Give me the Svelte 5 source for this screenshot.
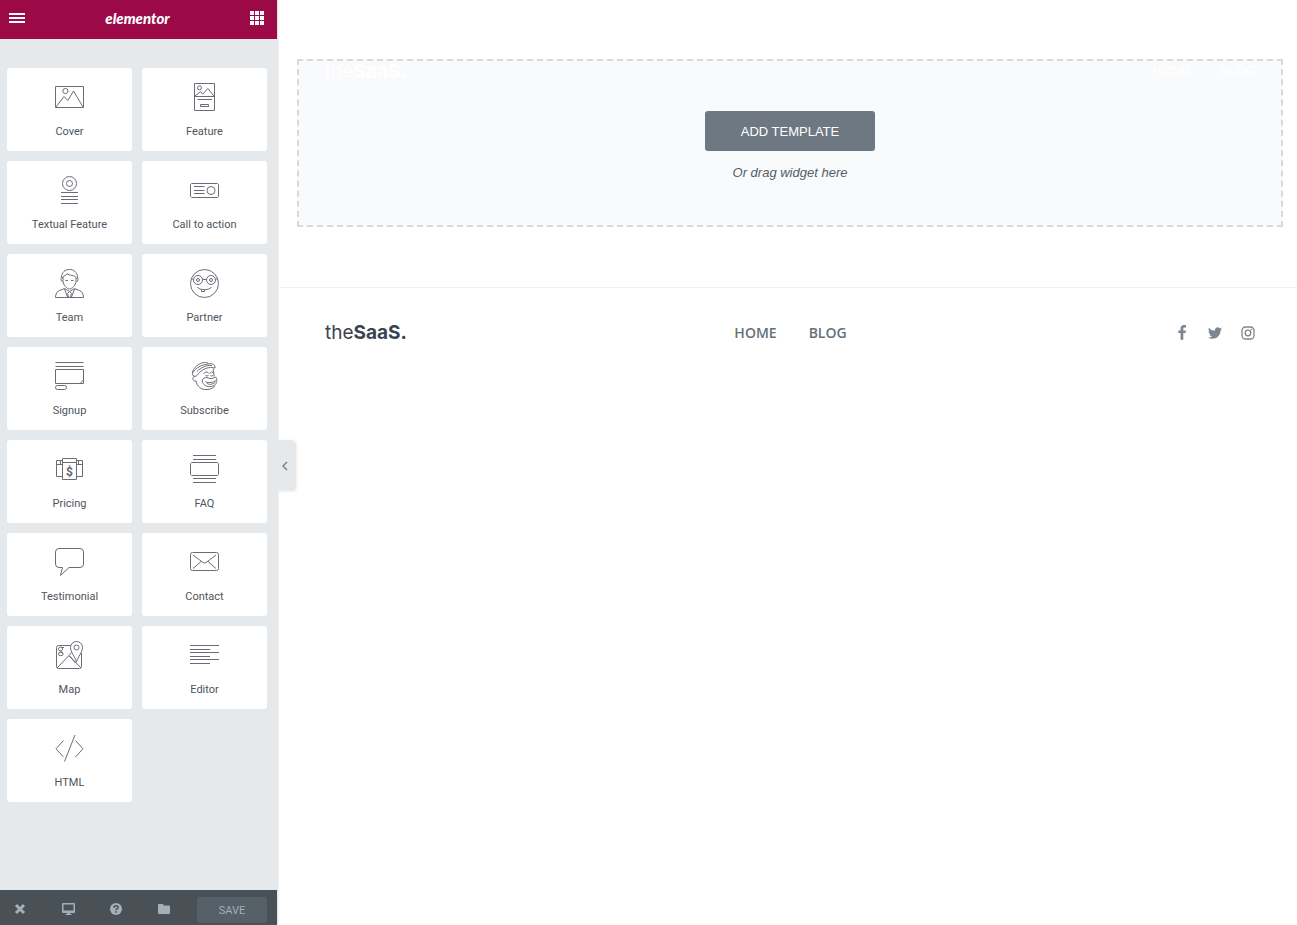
<script lang="ts">
	const widgets = [
		{ id: 'cover', name: 'Cover' },
		{ id: 'feature', name: 'Feature' },
		{ id: 'textual', name: 'Textual Feature' },
		{ id: 'cta', name: 'Call to action' },
		{ id: 'team', name: 'Team' },
		{ id: 'partner', name: 'Partner' },
		{ id: 'signup', name: 'Signup' },
		{ id: 'subscribe', name: 'Subscribe' },
		{ id: 'pricing', name: 'Pricing' },
		{ id: 'faq', name: 'FAQ' },
		{ id: 'testimonial', name: 'Testimonial' },
		{ id: 'contact', name: 'Contact' },
		{ id: 'map', name: 'Map' },
		{ id: 'editor', name: 'Editor' },
		{ id: 'html', name: 'HTML' }
	];

	// stroke icons on a 29x29 grid
	const icons: Record<string, string> = {
		cover:
			'M.5 3.5h28v21H.5zM7.8 8a2.6 2.6 0 1 0 5.2 0a2.6 2.6 0 1 0-5.2 0M1 24L9 13.5l3.8 4L18.5 8L28 24',
		feature:
			'M4.5.5h20v27h-20zM4.5 13.5h20M7.5 4.8a2 2 0 1 0 4 0a2 2 0 1 0-4 0M5 13l5.3-4.2l2.5 2.2l5-5.5L24 13M7.5 16.5H22M10.5 21.5h8v2h-8z',
		textual:
			'M7.5 7.5a7 7 0 1 0 14 0a7 7 0 1 0-14 0M11.5 7.5a3 3 0 1 0 6 0a3 3 0 1 0-6 0M6 16.5h17M6 20.5h17M6 23.5h17M6 27.5h17',
		cta: 'M1.5 7.5h26l1 1v12l-1 1h-26l-1-1v-12zM4 10.5h10.5M4 14.5h10.5M4 17.5h10.5M17 14.5a4 4 0 1 0 8 0a4 4 0 1 0-8 0',
		team: 'M7.5 13C5.5 12 6 9 6.5 8C7 3 10 .5 14.5 .5S22 3 22.5 8C23 9 23.5 12 21.5 13M8 8v4c0 4 4 8 6.5 8s6.5-4 6.5-8V9M7.5 9C8 6.5 12 6.5 12 4.5C14 7 20 5.5 21.5 9.5M10.5 11.5h2.5M16 11.5h2.5M.5 28.5C.5 25 2 22.5 4.5 21.5L9.5 19.5L14.5 22.5L19.5 19.5L24.5 21.5C27 22.5 28.5 25 28.5 28.5zM9.5 20l3 8M19.5 20l-3 8M14.5 22.5l-2 2l1 3.5M14.5 22.5l2 2l-1 3.5',
		partner:
			'M.5 14.5a14 14 0 1 0 28 0a14 14 0 1 0-28 0M3.5 11a4.5 4.5 0 1 0 9 0a4.5 4.5 0 1 0-9 0M16.5 11a4.5 4.5 0 1 0 9 0a4.5 4.5 0 1 0-9 0M6.5 11a1.5 1.5 0 1 0 3 0a1.5 1.5 0 1 0-3 0M19.5 11a1.5 1.5 0 1 0 3 0a1.5 1.5 0 1 0-3 0M12.5 10.5h4M1.5 9.5l2 1M27.5 9.5l-2 1M7.5 18C9 21.5 20 21.5 21.5 18M11.5 20.5v2h3v-2',
		signup:
			'M.5 .5h28M.5 4.5h28M.5 7.5h28v14H.5zM28.5 18l-3.5 3.5M3 23.5h6.5a2 2 0 0 1 0 4H2.5a2 2 0 0 1 0-4z',
		subscribe:
			'M3.5 14C0 10.5 5 4 10.5 1.5C13.5 0 18 0 18.5 2C22 1 25.500 2.500 25 6C19 4.500 13 6.500 8.5 11.5C7.5 13.5 5.5 15 3.5 14M3 10.500C6 6 11 2.500 18.5 2M7 9.500C11 5.500 16 3 22 3.500M5 14.5C1.5 15 2.5 19.5 6 19C7 24.5 11 28 17 27.5C21 27.5 23.5 25.5 25 24M23.5 6.5C22.500 9 24.500 11 24 14.500M14 12C14 9.500 18 9.500 19 11.5M20 11.5C20.500 9.500 23 9.500 23.500 11.5M15.500 13.500q1.500 1 3 0M20.500 13.500q1 1 2.500 0M17 15.500C12 15 11 20 14 22.500C16.500 25.500 23 25 25.500 22.500C27 20 27.500 17 25.500 15C23 17 20 17 17 15.500M15.500 19.500C18 21.500 24 20.500 26.500 18M16.500 20.500C18 23.500 23 22.500 25.500 20',
		pricing:
			'M7.5 3.5h14v21h-14zM7.5 7.5h14M7.5 5.5h-6v16h6M1.5 9.5h6M21.5 5.5h6v16h-6M21.5 9.5h6M5.5 5.5v4M23.5 5.5v4',
		faq: 'M3 .5h23M3 4.5h23M1.5 7.5h26l1 1v11l-1 1h-26l-1-1v-11zM3 23.5h23M3 27.5h23',
		testimonial:
			'M4 .5h21a3.5 3.5 0 0 1 3.5 3.5v12a3.5 3.5 0 0 1-3.5 3.5H14L5.5 27.5L7.5 19.5H4A3.5 3.5 0 0 1 .5 16V4A3.5 3.5 0 0 1 4 .5z',
		contact:
			'M2.5 4.5h24a2 2 0 0 1 2 2v14a2 2 0 0 1-2 2h-24a2 2 0 0 1-2-2v-14a2 2 0 0 1 2-2zM3 7L13 14.5q1.5 1 3 0L26 7M3 20.5L11 13.5M26 20.5L18 13.5',
		map: 'M15.5 4.5h-12a2 2 0 0 0-2 2v19a2 2 0 0 0 2 2h21a2 2 0 0 0 2-2V12M2 27L14 14.5L26 27M14 14.5L16.5 11.5M21.5 20.5C20 16 15.5 11 15.5 6.5a6 6 0 0 1 12 0C27.5 11 23 16 21.5 20.5zM19 6.5a2.5 2.5 0 1 0 5 0a2.5 2.5 0 1 0-5 0M14.5 15l6 7l1-2M3.500 8a2 2 0 1 0 4 0a2 2 0 1 0-4 0M6 6.500h3M5.500 10l2.500 2M3.500 13a2.300 1.700 0 1 0 4.600 0a2.300 1.700 0 1 0-4.600 0',
		editor: 'M0 4.5h29M0 8.5h20M0 11.5h29M0 15.5h20M0 18.5h29M0 22.5h20',
		html: 'M8.5 6.5L1 14.8L8.5 23M20.5 6.5L28 14.8L20.5 23M20 1L9.5 27.5'
	};
</script>

<div class="editor">
	<aside class="panel">
		<header class="panel-header">
			<button class="icon-btn" aria-label="Menu">
				<svg width="16" height="14" viewBox="0 0 16 14" fill="currentColor">
					<path d="M0 2h16v2H0zM0 6h16v2H0zM0 10h16v2H0z" />
				</svg>
			</button>
			<span class="brand">elementor</span>
			<button class="icon-btn" aria-label="Widgets">
				<svg width="14" height="14" viewBox="0 0 14 14" fill="currentColor">
					<path
						d="M0 0h4v4H0zM5 0h4v4H5zM10 0h4v4h-4zM0 5h4v4H0zM5 5h4v4H5zM10 5h4v4h-4zM0 10h4v4H0zM5 10h4v4H5zM10 10h4v4h-4z"
					/>
				</svg>
			</button>
		</header>

		<div class="panel-body">
			<div class="widgets">
				{#each widgets as widget}
					<button class="widget">
						<svg class="widget-icon" viewBox="0 0 29 29" aria-hidden="true">
							<path d={icons[widget.id]} />
							{#if widget.id === 'pricing'}
								<text x="14.5" y="20.5">$</text>
							{/if}
						</svg>
						<span>{widget.name}</span>
					</button>
				{/each}
			</div>
			<button class="collapse" aria-label="Hide panel">
				<svg width="6" height="10" viewBox="0 0 6 10"><path d="M5 1L1 5l4 4" /></svg>
			</button>
		</div>

		<footer class="panel-footer">
			<div class="tools">
				<button class="icon-btn" aria-label="Close">
					<svg width="16" height="16" viewBox="0 0 16 16">
						<path d="M4 4l8 8M12 4l-8 8" fill="none" stroke="currentColor" stroke-width="3" />
					</svg>
				</button>
				<button class="icon-btn" aria-label="Responsive mode">
					<svg width="16" height="16" viewBox="0 0 16 16" fill="currentColor">
						<path
							fill-rule="evenodd"
							d="M3 2h11q1 0 1 1v8q0 1-1 1h-4v1h1.5v1h-6v-1H7v-1H3q-1 0-1-1V3q0-1 1-1zM3.5 3.500v6h10v-6z"
						/>
					</svg>
				</button>
				<button class="icon-btn" aria-label="Help">
					<svg width="16" height="16" viewBox="0 0 16 16">
						<circle cx="8" cy="8" r="6" fill="currentColor" />
						<path
							d="M6 6.7C6 4.2 10 4.2 10 6.5C10 7.8 8 7.8 8 9.3M8 10.2v1.6"
							fill="none"
							stroke="#495157"
							stroke-width="1.6"
						/>
					</svg>
				</button>
				<button class="icon-btn" aria-label="Templates">
					<svg width="16" height="16" viewBox="0 0 16 16" fill="currentColor">
						<path d="M3 3h3.5q1 0 1 1v.5H13q1 0 1 1V12q0 1-1 1H3q-1 0-1-1V4q0-1 1-1z" />
					</svg>
				</button>
			</div>
			<button class="save">SAVE</button>
		</footer>
	</aside>

	<main class="preview">
		<section class="drop-area">
			<div class="site-header">
				<a class="logo" href="#home">the<b>SaaS.</b></a>
				<nav>
					<a href="#home">HOME</a>
					<a href="#blog">BLOG</a>
				</nav>
			</div>
			<button class="add-template">ADD TEMPLATE</button>
			<p>Or drag widget here</p>
		</section>

		<footer class="site-footer">
			<a class="logo" href="#home">the<b>SaaS.</b></a>
			<nav>
				<a href="#home">HOME</a>
				<a href="#blog">BLOG</a>
			</nav>
			<div class="social">
				<a href="#facebook" aria-label="Facebook">
					<svg width="16" height="16" viewBox="0 0 1792 1792" fill="currentColor">
						<path
							d="M1343 12v264h-157q-86 0-116 36t-30 108v189h293l-39 296h-254v759h-306v-759h-255v-296h255v-218q0-186 104-288.5t277-102.5q147 0 228 12z"
						/>
					</svg>
				</a>
				<a href="#twitter" aria-label="Twitter">
					<svg width="16" height="16" viewBox="0 0 1792 1792" fill="currentColor">
						<path
							d="M1684 408q-67 98-162 167 1 14 1 42 0 130-38 259.5t-115.5 248.5-184.5 210.5-258 146-323 54.5q-271 0-496-145 35 4 78 4 225 0 401-138-105-2-188-64.5t-114-159.5q33 5 61 5 43 0 85-11-112-23-185.5-111.5t-73.5-205.5v-4q68 38 146 41-66-44-105-115t-39-154q0-88 44-163 121 149 294.5 238.5t371.5 99.5q-8-38-8-74 0-134 94.5-228.5t228.5-94.5q140 0 236 102 109-21 205-78-37 115-142 178 93-10 186-50z"
						/>
					</svg>
				</a>
				<a href="#instagram" aria-label="Instagram">
					<svg width="16" height="16" viewBox="0 0 16 16" fill="none" stroke="currentColor">
						<rect x="2" y="2" width="12" height="12" rx="3.5" stroke-width="1.3" />
						<circle cx="8" cy="8" r="2.8" stroke-width="1.3" />
						<circle cx="11.5" cy="4.5" r=".8" fill="currentColor" stroke="none" />
					</svg>
				</a>
			</div>
		</footer>
	</main>
</div>

<style>
	:global(body) {
		background: #fff;
		font-family: Roboto, 'Liberation Sans', sans-serif;
	}

	button {
		padding: 0;
		border: 0;
		background: none;
		color: inherit;
		font-family: inherit;
		cursor: pointer;
	}

	a {
		color: inherit;
		text-decoration: none;
	}

	svg {
		display: block;
	}

	.editor {
		display: flex;
		min-height: 100vh;
	}

	.panel {
		display: flex;
		flex-direction: column;
		flex: 0 0 277px;
		min-width: 0;
		background: #e6e9ec;
		box-shadow: 1px 0 2px rgba(0, 0, 0, 0.15);
	}

	.panel-header {
		display: flex;
		align-items: center;
		justify-content: space-between;
		height: 39px;
		padding: 0 13px 4px 9px;
		background: #9b0a46;
		color: #fff;
		box-sizing: border-box;
	}

	.brand {
		font-family: Lato, sans-serif;
		font-size: 15px;
		font-style: italic;
		font-weight: 900;
		line-height: 20px;
	}

	.panel-body {
		position: relative;
		flex: 1;
		padding: 29px 10px 29px 7px;
	}

	.widgets {
		display: grid;
		grid-template-columns: 1fr 1fr;
		gap: 10px;
	}

	.widget {
		display: flex;
		flex-direction: column;
		align-items: center;
		gap: 14px;
		padding: 15px 0 13px;
		background: #fff;
		border-radius: 3px;
		color: #50555b;
		font-size: 11px;
		line-height: 12px;
	}

	.widget-icon {
		width: 29px;
		height: 29px;
		fill: none;
		stroke: #6a6d76;
	}
	.widget-icon text {
		fill: #62666f;
		stroke: none;
		font-size: 12px;
		font-weight: bold;
		text-anchor: middle;
	}

	.collapse {
		position: absolute;
		top: 50%;
		left: 100%;
		display: grid;
		place-items: center;
		width: 17px;
		height: 50px;
		margin-top: -25px;
		padding: 2px 2px 0 0;
		background: #e6e9ec;
		border-radius: 0 3px 3px 0;
		box-shadow: 2px 1px 3px rgba(0, 0, 0, 0.12);
	}
	.collapse path {
		fill: none;
		stroke: #6d7882;
		stroke-width: 1.3;
	}

	.panel-footer {
		display: flex;
		align-items: center;
		justify-content: space-between;
		padding: 7px 10px 2px 12px;
		background: #495157;
		color: #a4afb7;
	}

	.tools {
		display: flex;
		gap: 32px;
		padding-bottom: 2px;
	}

	.save {
		width: 70px;
		height: 26px;
		background: #556068;
		border-radius: 3px;
		font-size: 11px;
	}

	.preview {
		flex: 1;
		min-width: 0;
	}

	.drop-area {
		position: relative;
		display: flex;
		flex-direction: column;
		align-items: center;
		margin: 59px 14px 60px 20px;
		padding: 50px 0 43px;
		border: 2px dashed #d5dadf;
		background: #f9fafc;
		font-family: 'Liberation Sans', Arial, sans-serif;
	}
	.drop-area p {
		margin: 13px 0 0;
		color: #555d66;
		font-size: 13px;
		font-style: italic;
		line-height: 18px;
	}

	.site-header {
		position: absolute;
		top: -1px;
		left: 26px;
		right: 26px;
		display: flex;
		justify-content: space-between;
		color: #fff;
	}

	.add-template {
		width: 170px;
		height: 40px;
		background: #6d7882;
		border-radius: 3px;
		color: #fff;
		font-size: 13px;
	}

	.logo {
		font-family: Inter, sans-serif;
		font-size: 19px;
		line-height: 24px;
	}
	.logo b {
		font-weight: 700;
	}

	nav {
		display: flex;
		gap: 32px;
		font-family: 'Open Sans', sans-serif;
		font-size: 14px;
		font-weight: 600;
		line-height: 20px;
	}
	.site-header nav {
		gap: 28px;
		font-size: 13px;
	}

	.site-footer {
		display: grid;
		grid-template-columns: 1fr auto 1fr;
		align-items: center;
		padding: 33px 41px 33px 48px;
		border-top: 1px solid #f0f1f2;
		color: #65707a;
	}
	.site-footer .logo {
		color: #3a4350;
	}

	.social {
		display: flex;
		justify-content: flex-end;
		gap: 17px;
		color: #7d868e;
	}
</style>
